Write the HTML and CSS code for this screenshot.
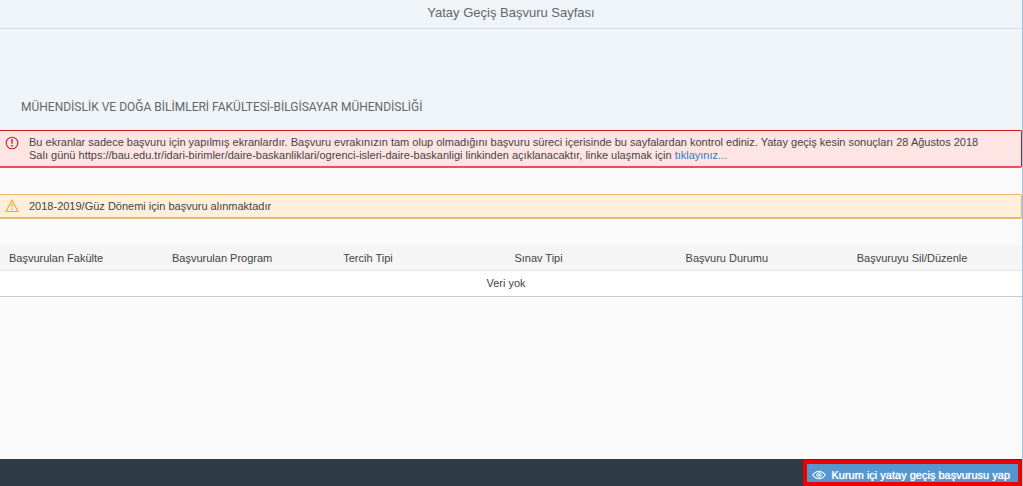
FILE: index.html
```html
<!DOCTYPE html>
<html lang="tr">
<head>
<meta charset="utf-8">
<title>Yatay Geçiş Başvuru Sayfası</title>
<link rel="stylesheet" href="styles.css">
</head>
<body>
<div class="page">
  <header class="title-bar"><h1>Yatay Geçiş Başvuru Sayfası</h1></header>
  <div class="program"><h2>MÜHENDİSLİK VE DOĞA BİLİMLERİ FAKÜLTESİ-BİLGİSAYAR MÜHENDİSLİĞİ</h2></div>
  <main class="content">
    <div class="message message-error" role="alert">
      <svg class="message-icon" viewBox="0 0 14 14" aria-hidden="true"><circle cx="7" cy="7" r="5.8" fill="none" stroke="currentColor" stroke-width="1.1"/><path d="M6.1 3.3h1.8L7.5 8h-1zM6.2 9h1.6v1.6H6.2z" fill="currentColor"/></svg>
      <p>Bu ekranlar sadece başvuru için yapılmış ekranlardır. Başvuru evrakınızın tam olup olmadığını başvuru süreci içerisinde bu sayfalardan kontrol ediniz. Yatay geçiş kesin sonuçları 28 Ağustos 2018 Salı günü https://bau.edu.tr/idari-birimler/daire-baskanliklari/ogrenci-isleri-daire-baskanligi linkinden açıklanacaktır, linke ulaşmak için <a href="#">tıklayınız...</a></p>
    </div>
    <div class="message message-warning" role="status">
      <svg class="message-icon" viewBox="0 0 14 14" aria-hidden="true"><path d="M7 1.3 13.1 12.5H.9z" fill="none" stroke="currentColor" stroke-width="1.1" stroke-linejoin="round"/><path d="M6.2 5h1.6l-.4 3.6h-.8zM6.3 9.6h1.4V11H6.3z" fill="currentColor"/></svg>
      <p>2018-2019/Güz Dönemi için başvuru alınmaktadır</p>
    </div>
    <table class="applications">
      <thead>
        <tr>
          <th scope="col" class="first">Başvurulan Fakülte</th>
          <th scope="col">Başvurulan Program</th>
          <th scope="col">Tercih Tipi</th>
          <th scope="col">Sınav Tipi</th>
          <th scope="col">Başvuru Durumu</th>
          <th scope="col">Başvuruyu Sil/Düzenle</th>
        </tr>
      </thead>
      <tbody><tr><td colspan="6">Veri yok</td></tr></tbody>
    </table>
  </main>
  <footer class="action-bar">
    <button type="button" class="apply">
      <svg class="eye" viewBox="0 0 14 10" aria-hidden="true"><path d="M.7 5Q3.5 1.2 7 1.2T13.3 5Q10.5 8.8 7 8.8T.7 5z" fill="none" stroke="currentColor" stroke-width="1.1"/><circle cx="7" cy="5" r="2.3" fill="none" stroke="currentColor"/><circle cx="7" cy="5" r="1" fill="currentColor"/></svg>
      <span>Kurum içi yatay geçiş başvurusu yap</span>
    </button>
  </footer>
</div>
</body>
</html>
```

FILE: styles.css
```css
* {
  box-sizing: border-box;
}

body {
  margin: 0;
  background: #fafafa;
  color: #444;
  font: 11px/13px "Liberation Sans", Arial, sans-serif;
}

h1,
h2,
p {
  margin: 0;
  font-weight: normal;
}

.page {
  display: flex;
  flex-direction: column;
  min-height: 100vh;
  border-right: 1px solid #a9c3d6;
}

.title-bar {
  padding: 5px 0 7px;
  background: #eff4f9;
  border-bottom: 1px solid #d5e0ec;
  text-align: center;
}

.title-bar h1 {
  color: #666;
  font-size: 13px;
  line-height: 16px;
}

.program {
  padding: 71px 21px 15px;
  background: #eff4f9;
}

.program h2 {
  color: #666;
  font-family: Roboto, "Liberation Sans", sans-serif;
  font-size: 12px;
  line-height: 15px;
}

.content {
  flex: 1;
}

.message {
  display: flex;
  gap: 10px;
  margin-bottom: 26px;
  padding: 5px 28px 5px 5px;
  border: 1px solid;
  border-left: 0;
  border-radius: 0 2px 2px 0;
}

.message-icon {
  flex: none;
  width: 14px;
  height: 14px;
}

.message-error {
  padding-bottom: 4px;
  background: #ffe4e4;
  border-color: #cc1919;
  border-bottom: 2px solid #ee4e55;
}

.message-error .message-icon {
  color: #c22;
}

.message-warning {
  padding: 4px 20px 4px 5px;
  background: #ffefdb;
  border-color: #ebb96a;
  border-bottom-width: 2px;
}

.message-warning p {
  padding-top: 1px;
}

.message-warning .message-icon {
  color: #e9a53c;
}

.message a {
  display: inline-block;
  color: #2a7fbd;
  text-decoration: none;
}

.applications {
  width: 100%;
  table-layout: fixed;
  border-collapse: collapse;
}

.applications th {
  padding: 6px 0 5px 6px;
  background: #f5f5f5;
  border-bottom: 1px solid #e5e5e5;
  font-weight: normal;
  line-height: 14px;
  text-align: left;
}

.applications th.first {
  width: 166px;
  padding-left: 9px;
}

.applications td {
  padding: 5px 10px 6px 0;
  background: #fff;
  border-bottom: 1px solid #ccc;
  line-height: 14px;
  text-align: center;
}

.action-bar {
  display: flex;
  justify-content: flex-end;
  padding-top: 1px;
  background: #2f3c48;
}

.apply {
  display: flex;
  align-items: center;
  gap: 5px;
  padding: 4px 8px 0 5px;
  background: #5496cd;
  border: 4px solid #ec0008;
  color: #fff;
  font: 11px/14px "Liberation Sans", Arial, sans-serif;
  text-shadow: 0 0 1px #fff;
}

.eye {
  width: 14px;
  height: 10px;
}
```
